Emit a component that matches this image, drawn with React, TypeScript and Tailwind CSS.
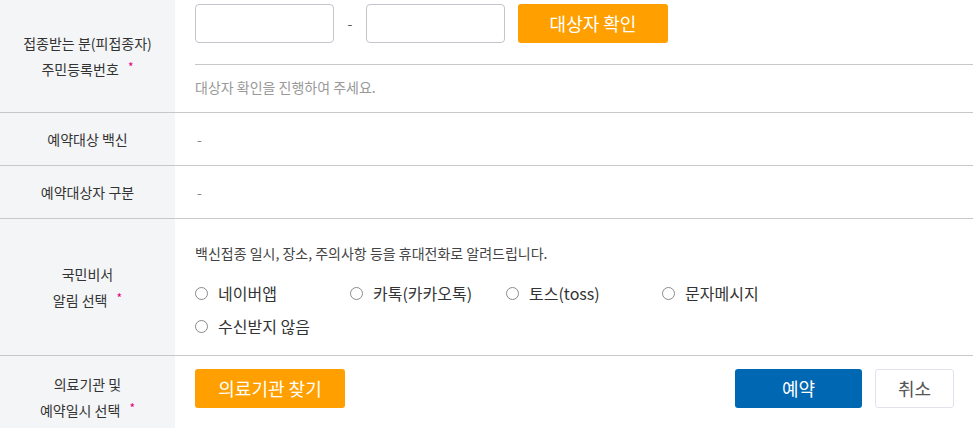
import { useState } from 'react';

const font = { fontFamily: '"Noto Sans CJK KR", "Noto Sans", sans-serif' };

function Star() {
  return <span className="text-[#e6007e] text-[12px] align-top ml-[6px] relative top-[-2px]">*</span>;
}

function Label({ children }: { children: React.ReactNode }) {
  return (
    <div className="w-[175px] shrink-0 bg-[#f4f5f7] flex items-center justify-center text-center text-[14px] leading-[26px] text-[#333]">
      <div>{children}</div>
    </div>
  );
}

const options = ['네이버앱', '카톡(카카오톡)', '토스(toss)', '문자메시지', '수신받지 않음'];

function App() {
  const [picked, setPicked] = useState('');

  return (
    <div className="w-[973px] h-[428px] overflow-hidden bg-white" style={font}>
      <div className="flex h-[113px] border-b border-[#c8c8c8]">
        <Label>
          접종받는 분(피접종자)<br />주민등록번호 <Star />
        </Label>
        <div className="flex-1 pl-[20px] pt-[4px]">
          <div className="flex items-center h-[39px]">
            <input className="w-[139px] h-[39px] border border-[#c4c4cc] rounded-[4px] outline-none" />
            <span className="w-[32px] text-center text-[14px] text-[#555]">-</span>
            <input className="w-[139px] h-[39px] border border-[#c4c4cc] rounded-[4px] outline-none" />
            <button className="ml-[13px] w-[150px] h-[39px] bg-[#ff9f00] text-white text-[18px] rounded-[3px]">
              대상자 확인
            </button>
          </div>
          <div className="mt-[21px] border-t border-[#c8c8c8]" />
          <div className="pt-[12px] text-[14px] leading-[20px] text-[#999]">대상자 확인을 진행하여 주세요.</div>
        </div>
      </div>

      <div className="flex h-[53px] border-b border-[#c8c8c8]">
        <Label>예약대상 백신</Label>
        <div className="flex-1 pl-[22px] flex items-center text-[14px] text-[#888]">-</div>
      </div>

      <div className="flex h-[53px] border-b border-[#c8c8c8]">
        <Label>예약대상자 구분</Label>
        <div className="flex-1 pl-[22px] flex items-center text-[14px] text-[#888]">-</div>
      </div>

      <div className="flex h-[137px] border-b border-[#c8c8c8]">
        <Label>
          국민비서<br />알림 선택 <Star />
        </Label>
        <div className="flex-1 pl-[20px] pt-[24px]">
          <div className="text-[14px] leading-[20px] text-[#444]">
            백신접종 일시, 장소, 주의사항 등을 휴대전화로 알려드립니다.
          </div>
          <div className="mt-[20px] grid grid-cols-[155px_156px_156px_156px] gap-y-[13px]">
            {options.map(o => (
              <label key={o} className="flex items-center h-[20px] text-[16px] text-[#333] cursor-pointer">
                <span
                  onClick={() => setPicked(o)}
                  className="w-[13px] h-[13px] rounded-full border border-[#8a8a8a] mr-[10px] flex items-center justify-center"
                >
                  {picked === o && <span className="w-[7px] h-[7px] rounded-full bg-[#0067b3]" />}
                </span>
                {o}
              </label>
            ))}
          </div>
        </div>
      </div>

      <div className="flex h-[80px]">
        <Label>
          <div className="pt-[2px]">
            의료기관 및<br />예약일시 선택 <Star />
          </div>
        </Label>
        <div className="flex-1 pl-[20px] pr-[19px] pt-[13px] flex items-start justify-between">
          <button className="w-[150px] h-[39px] bg-[#ff9f00] text-white text-[18px] rounded-[3px]">의료기관 찾기</button>
          <div className="flex gap-[13px]">
            <button className="w-[127px] h-[39px] bg-[#0067b3] text-white text-[18px] rounded-[3px]">예약</button>
            <button className="w-[79px] h-[39px] bg-white border border-[#e2e2ee] text-[#555] text-[18px] rounded-[3px]">취소</button>
          </div>
        </div>
      </div>
    </div>
  );
}

export default App;
